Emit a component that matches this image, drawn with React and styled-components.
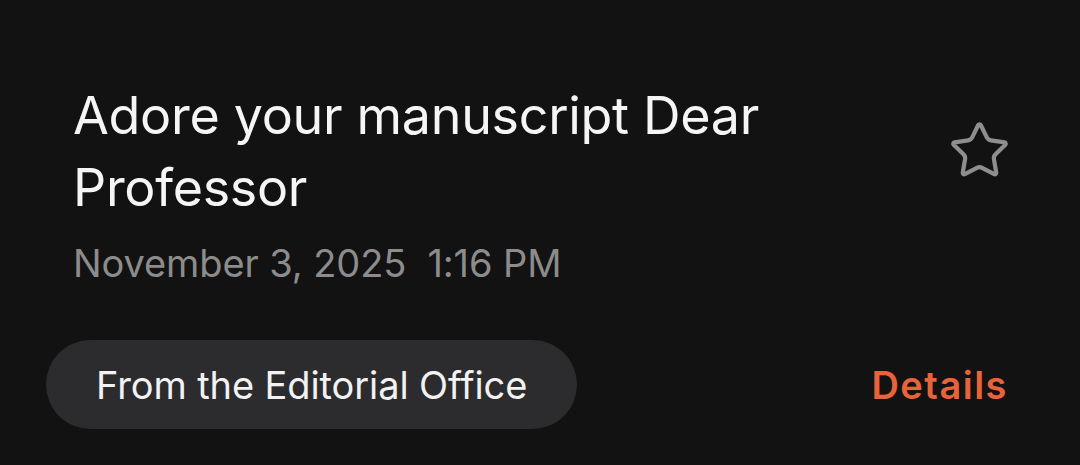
import React from "react";
import styled, { createGlobalStyle } from "styled-components";
import { Star } from "lucide-react";

const GlobalStyle = createGlobalStyle`
	html, body {
		margin: 0;
		padding: 0;
		background: #121212;
	}
	body {
		font-family: Inter, "Noto Sans", Roboto, sans-serif;
		-webkit-font-smoothing: antialiased;
	}
`;

const Card = styled.div`
	width: 1080px;
	height: 465px;
	box-sizing: border-box;
	padding: 80px 73px 0 73px;
	background: #121212;
	display: flex;
	flex-direction: column;
`;

const Header = styled.div`
	display: flex;
	justify-content: space-between;
	align-items: flex-start;
`;

const TextCol = styled.div`
	display: flex;
	flex-direction: column;
`;

const Title = styled.h1`
	margin: 0;
	max-width: 720px;
	font-size: 52px;
	line-height: 72px;
	font-weight: 400;
	color: #f5f5f5;
	letter-spacing: -0.3px;
`;

const DateLine = styled.div`
	margin-top: 17px;
	font-size: 38px;
	line-height: 44px;
	color: #8c8c8c;
	white-space: pre;
	letter-spacing: -0.1px;
`;

const StarButton = styled.button`
	margin-top: 39px;
	margin-right: -4px;
	padding: 0;
	border: none;
	background: none;
	color: #8e8e8e;
	display: flex;
`;

const Footer = styled.div`
	margin-top: 55px;
	margin-left: -27px;
	display: flex;
	justify-content: space-between;
	align-items: center;
`;

const Chip = styled.div`
	height: 89px;
	box-sizing: border-box;
	padding: 0 50px;
	border-radius: 45px;
	background: #2c2c2e;
	display: flex;
	align-items: center;
	font-size: 38px;
	color: #f2f2f2;
	letter-spacing: -0.1px;
`;

const LinkButton = styled.button`
	padding: 0;
	border: none;
	background: none;
	font-family: inherit;
	font-size: 38px;
	font-weight: 600;
	color: #e8633b;
	letter-spacing: 1.5px;
	margin-right: -1px;
`;

export default function App() {
	return (
		<>
			<GlobalStyle />
			<Card>
				<Header>
					<TextCol>
						<Title>{`Adore your manuscript Dear Professor`}</Title>
						<DateLine>{`November 3, 2025  1:16 PM`}</DateLine>
					</TextCol>
					<StarButton aria-label="Star">
						<Star size={63} strokeWidth={1.6} />
					</StarButton>
				</Header>
				<Footer>
					<Chip>{`From the Editorial Office`}</Chip>
					<LinkButton>{`Details`}</LinkButton>
				</Footer>
			</Card>
		</>
	);
}
